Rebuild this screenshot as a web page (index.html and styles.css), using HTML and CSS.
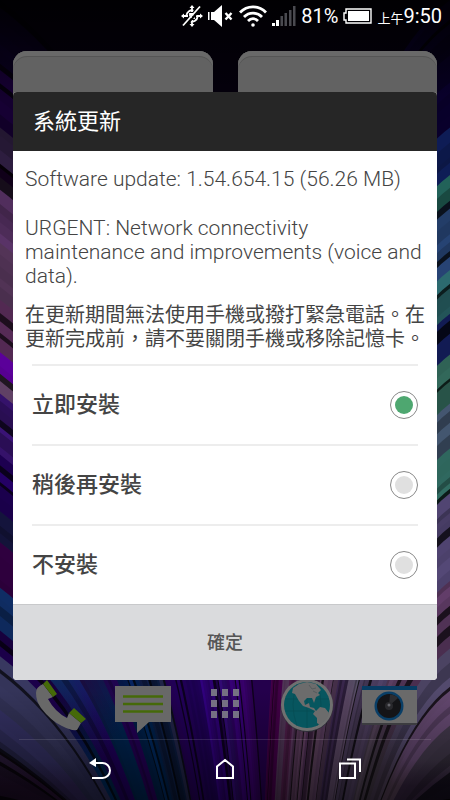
FILE: index.html
```html
<!DOCTYPE html>
<html lang="zh-Hant">
<head>
  <meta charset="UTF-8">
  <meta name="viewport" content="width=device-width, initial-scale=1.0">
  <title>系統更新</title>
  <link rel="stylesheet" href="styles.css">
</head>
<body>
  <div class="phone">
    <svg class="wallpaper" id="wallpaper" viewBox="0 0 450 800" preserveAspectRatio="none" aria-hidden="true"></svg>

    <div class="home">
      <header class="status-bar">
        <svg width="22" height="22" viewBox="0 0 22 22" fill="none" stroke="#fff" stroke-width="1.8">
          <path d="M5.500 10a5.500 5.500 0 0 1 7-4.500M16.500 12a5.500 5.500 0 0 1-7 4.500M11 2v5M11 15v5M2 11h5M15 11h5M9 11.500V9h3M13 10.500V13h-3"/>
          <path d="M11 0l2.500 3h-5zM11 22l2.500-3h-5zM0 11l3-2.500v5zM22 11l-3-2.500v5z" fill="#fff" stroke="none"/>
          <path d="M4 21.500L21 2.500" stroke="#000" stroke-width="2"/>
          <path d="M2 20.500L19 1.500"/>
        </svg>
        <svg width="26" height="22" viewBox="0 0 26 22" fill="#fff">
          <path d="M0 7h1.500v8H0zM3 7h3v8H3zM6 7l8-7v22l-8-7z"/>
          <path d="M17.500 8l6 6.500M23.500 8l-6 6.500" stroke="#fff" stroke-width="2.400"/>
        </svg>
        <svg width="28" height="22" viewBox="0 0 28 22" fill="none" stroke="#fff" stroke-width="2.800">
          <path d="M1 7.500C8 0 20 0 27 7.500M5 12C10 6.800 18 6.800 23 12M9 16C12 13 16 13 19 16"/>
          <circle cx="14" cy="20" r="1.800" fill="#fff" stroke="none"/>
        </svg>
        <svg width="24" height="22" viewBox="0 0 24 22" fill="#4a4a50">
          <path fill="#fff" d="M0 18h3v3H0zM4 15h3v6H4z"/>
          <path d="M8.500 11h2.500v10H8.500zM12.500 8H15v13h-2.500zM17 5h2.500v16H17zM21 1h2.500v20H21z"/>
        </svg>
        <span class="percent">81%</span>
        <svg width="29" height="16" viewBox="0 0 29 16">
          <path d="M3 1h25v14H3v-3H1V5h2z" fill="none" stroke="#fff" stroke-width="1.400"/>
          <path d="M5 3h21v10H5z" fill="#fff"/>
        </svg>
        <span class="clock"><small>上午</small>9:50</span>
      </header>

      <div class="widgets">
        <div class="widget"></div>
        <div class="widget"></div>
      </div>

      <nav class="dock">
        <a href="#phone" aria-label="Phone">
          <svg viewBox="0 0 56 60">
            <path d="M10 8Q3 11 3 17Q3 25 8 32Q18 45 29 50Q38 55 44 54L48 47L36 37L34 42Q22 36 15 23L20 21z" fill="#686868"/>
            <path d="M10 8l4-4l10 14l-4 3zM36 37l5-5l12 11l-5 4z" fill="#456908"/>
          </svg>
        </a>
        <a href="#messages" aria-label="Messages">
          <svg viewBox="0 0 56 60">
            <path d="M0 10h56v36H34L22 57V46H0z" fill="#686868"/>
            <path d="M8 20.500h40M8 28h40M8 35.500h40" stroke="#456908" stroke-width="2.500"/>
          </svg>
        </a>
        <a href="#apps" aria-label="Apps">
          <svg viewBox="0 0 56 60" fill="#757183">
            <path d="M14 13h6v7h-6zM25 13h6v7h-6zM36 13h6v7h-6zM14 24h6v7h-6zM25 24h6v7h-6zM36 24h6v7h-6zM14 35h6v7h-6zM25 35h6v7h-6zM36 35h6v7h-6z"/>
          </svg>
        </a>
        <a href="#browser" aria-label="Internet">
          <svg viewBox="0 0 56 60">
            <circle cx="28" cy="30" r="26" fill="#30303a"/>
            <circle cx="28" cy="29" r="26" fill="#707070"/>
            <circle cx="28" cy="29" r="23" fill="#07565f"/>
            <path d="M6 23h44M6 35h44M28 6v46M18 8q-8 20 0 42M38 8q8 20 0 42" fill="none" stroke="#064950" stroke-width="0.600"/>
            <path d="M14 12L20 8L28 6L37 8L42 14L39 17L41 19L37 21L35 27L33 22L28 22L25 25L26 29L30 27L31 31L35 32L37 35L41 31L46 32L50 37L48 43L44 46L41 49L38 47L38 42L34 38L36 35L30 32L24 30L20 25L16 18L13 17z" fill="#6c6c6c"/>
            <path d="M30 9l3 4l4-1M34 15l4 2" fill="none" stroke="#555b5d" stroke-width="1"/>
          </svg>
        </a>
        <a href="#camera" aria-label="Camera">
          <svg viewBox="0 0 56 60">
            <path d="M1 10h55v39H1z" fill="#3c3c40"/>
            <path d="M1 10h55v37H1z" fill="#6a6a6a"/>
            <path d="M1 10h55v4H1z" fill="#073c63"/>
            <circle cx="28" cy="30" r="14.500" fill="#093e66"/>
            <circle cx="28" cy="30" r="12" fill="#141417"/>
            <path d="M28 30L29 18.500A12 12 0 0 1 37 22z" fill="#2c2c30"/>
            <circle cx="28" cy="30" r="4" fill="#28282c"/>
            <circle cx="28" cy="29" r="1.500" fill="#66666c"/>
          </svg>
        </a>
      </nav>

      <footer class="nav-bar">
        <button type="button" aria-label="Back">
          <svg width="22" height="22" viewBox="0 0 22 22" fill="none" stroke="#fff" stroke-width="2">
            <path d="M6 5h7.500a7.500 7.500 0 0 1 0 15H3"/>
            <path d="M0 5l7-5v9z" fill="#fff" stroke="none"/>
          </svg>
        </button>
        <button type="button" aria-label="Home">
          <svg width="22" height="22" viewBox="0 0 22 22" fill="none" stroke="#fff" stroke-width="2">
            <path d="M3 20V8.500L11 2l8 6.500V20z"/>
          </svg>
        </button>
        <button type="button" aria-label="Recent apps">
          <svg width="22" height="22" viewBox="0 0 22 22" fill="none" stroke="#fff" stroke-width="2">
            <path d="M1 5.500h15V20H1zM8 1.500h13V14"/>
          </svg>
        </button>
      </footer>
    </div>

    <div class="overlay">
      <form class="dialog" role="dialog" aria-labelledby="dialog-title">
        <h1 id="dialog-title">系統更新</h1>
        <div class="message">
          <p>Software update: 1.54.654.15 (56.26 MB)</p>
          <p>URGENT: Network connectivity maintenance and improvements (voice and data).</p>
          <p class="warning">在更新期間無法使用手機或撥打緊急電話。在更新完成前，請不要關閉手機或移除記憶卡。</p>
        </div>
        <div class="options">
          <label>立即安裝 <input type="radio" name="install" value="now" checked></label>
          <label>稍後再安裝 <input type="radio" name="install" value="later"></label>
          <label>不安裝 <input type="radio" name="install" value="never"></label>
        </div>
        <button type="button" class="confirm">確定</button>
      </form>
    </div>
  </div>
  <script src="wallpaper.js"></script>
</body>
</html>
```

FILE: styles.css
```css
* {
  box-sizing: border-box;
}

body {
  margin: 0;
  background: #04000c;
  font-family: Roboto, "Noto Sans CJK TC", sans-serif;
  color: #444;
}

/* wallpaper, home screen and dialog share one grid cell */
.phone {
  display: grid;
  min-height: 100vh;
}
.wallpaper,
.home,
.overlay {
  grid-area: 1 / 1;
  min-width: 0;
}
.wallpaper {
  width: 100%;
  height: 100vh;
}

.home {
  display: flex;
  flex-direction: column;
}

.status-bar {
  display: flex;
  justify-content: flex-end;
  align-items: center;
  gap: 5px;
  height: 32px;
  padding-right: 8px;
  color: #fff;
  font-size: 20px;
}
.clock small {
  font-size: 13px;
}

.widgets {
  display: flex;
  flex: 1;
  gap: 25px;
  padding: 19px 13px 0;
}
.widget {
  flex: 1;
  height: 160px;
  border-radius: 14px;
  background: #626262;
  box-shadow: inset 0 5px #696969, inset 0 6px #555;
}

.dock {
  display: flex;
  padding: 0 20px 3px;
}
.dock a {
  flex: 1;
  display: flex;
  justify-content: center;
}
.dock svg {
  width: 56px;
  height: 60px;
}

.nav-bar {
  display: flex;
  height: 61px;
  margin: 0 19px;
  padding: 0 19px;
  border-top: 1px solid rgba(255, 255, 255, 0.12);
}
.nav-bar button {
  flex: 1;
  padding: 0;
  border: none;
  background: none;
  cursor: pointer;
}

.overlay {
  display: flex;
  align-items: center;
  padding: 32px 13px 60px;
}

.dialog {
  flex: 1;
  min-width: 0;
  border-radius: 4px;
  overflow: hidden;
  background: #fff;
}
.dialog h1 {
  margin: 0;
  padding: 0 20px;
  background: #262626;
  color: #fff;
  font-size: 22px;
  font-weight: 400;
  line-height: 59px;
}

.message {
  padding: 16px 12px 13px;
  font-size: 21px;
  font-weight: 300;
  line-height: 24px;
}
.message p {
  margin: 0 0 25px;
}
.message .warning {
  margin: -10px 0 0;
  font-size: 20px;
  font-weight: 400;
}

.options {
  padding: 0 19px;
}
.options label {
  display: flex;
  justify-content: space-between;
  align-items: center;
  height: 80px;
  border-top: 2px solid #ededed;
  font-size: 22px;
  font-weight: 500;
  line-height: 36px;
  cursor: pointer;
}
.options input {
  appearance: none;
  width: 28px;
  height: 28px;
  margin: 0;
  padding: 4px;
  border: 1px solid #888;
  border-radius: 50%;
  background: #e0e0e0 content-box;
}
.options input:checked {
  background-color: #4ea770;
}

.confirm {
  display: block;
  width: 100%;
  height: 76px;
  padding: 0 0 4px;
  border: none;
  border-top: 1px solid #c8c9cb;
  background: #dadbdd;
  color: #555;
  font: inherit;
  font-size: 18px;
  font-weight: 500;
  cursor: pointer;
}
```

FILE: wallpaper.js
```js
const NS = 'http://www.w3.org/2000/svg';
const svg = document.getElementById('wallpaper');

// each stop: y on the screen edge, colour there, colour at the bottom
const left = [
  [0, '#08001c', '#30005c'],
  [60, '#12002a', '#2c0060'],
  [120, '#281a38', '#2b0866'],
  [150, '#100018', '#1c0044'],
  [170, '#4a2a55', '#280068'],
  [240, '#4c3050', '#1c0050'],
  [290, '#603060', '#260064'],
  [340, '#4c0080', '#1c0044'],
  [370, '#6a4870', '#242850'],
  [390, '#301060', '#0a1838'],
  [450, '#20005a', '#002454'],
  [510, '#101030', '#1c0044'],
  [540, '#300040', '#002450'],
  [580, '#0c2450', '#180048'],
  [620, '#1a0045', '#002450'],
  [655, '#3a3a64', '#2c2c54'],
  [700, '#2a2850', '#241c40'],
  [750, '#20142c', '#1c0c24']
];
const right = [
  [0, '#06001c', '#38003c'],
  [80, '#080028', '#48304e'],
  [125, '#0c1848', '#40183c'],
  [170, '#1c5048', '#482c4c'],
  [200, '#203860', '#503450'],
  [270, '#286064', '#442848'],
  [310, '#10184a', '#503850'],
  [350, '#2c5c50', '#4c3450'],
  [400, '#3a4a60', '#302040'],
  [440, '#285850', '#4c3c54'],
  [490, '#443a60', '#3c3048'],
  [570, '#5a3860', '#483c4c'],
  [640, '#4c4464', '#403448'],
  [680, '#563e60', '#403040'],
  [720, '#383040', '#281c30'],
  [770, '#18141c', '#100c18']
];

let seed = 7;
function rand() {
  seed = (seed * 16807) % 2147483647;
  return seed / 2147483647;
}

function shade(hex, k) {
  const n = parseInt(hex.slice(1), 16);
  const c = [n >> 16, (n >> 8) & 255, n & 255].map(v => Math.round(v * k));
  return `rgb(${c.join(',')})`;
}

function add(name, attrs, parent = svg) {
  const el = document.createElementNS(NS, name);
  for (const key in attrs) el.setAttribute(key, attrs[key]);
  parent.appendChild(el);
  return el;
}

// every strand covers everything below it, so the next one leaves a ribbon
function drawStrands(stops, side) {
  let y = 0;
  let i = 0;
  while (y < 800) {
    const stop = stops.filter(s => s[0] <= y).pop();
    const k = rand() < 0.2 ? 0.3 : 0.8 + rand() * 0.45;
    const reach = (side === 'left' ? 262 : 185) * Math.pow(1 - y / 800, 0.5);
    // high strands turn down sharply, low ones run nearly straight
    const bend = reach * (0.85 - 0.35 * y / 800);
    const px = v => side === 'left' ? v : 450 - v;
    const id = side + i++;
    const grad = add('linearGradient', {
      id, gradientUnits: 'userSpaceOnUse', x1: 0, x2: 0, y1: Math.min(y + 60, 760), y2: 800
    });
    add('stop', { offset: 0, 'stop-color': shade(stop[1], k) }, grad);
    add('stop', { offset: 0.65, 'stop-color': shade(stop[2], k) }, grad);
    add('path', {
      d: `M${px(0)} ${y}Q${px(bend)} ${y + Math.min(bend * 0.75, (800 - y) * 0.45)} ${px(reach)} 800H${px(0)}Z`,
      fill: `url(#${id})`
    });
    y += k < 0.4 ? 3 + rand() * 5 : 5 + rand() * 10;
  }
}

function drawFade(id, y, height, from, to) {
  const grad = add('linearGradient', { id, x1: 0, x2: 0, y1: 0, y2: 1 });
  add('stop', { offset: 0, 'stop-color': '#000', 'stop-opacity': from }, grad);
  add('stop', { offset: 1, 'stop-color': '#000', 'stop-opacity': to }, grad);
  add('rect', { y, width: 450, height, fill: `url(#${id})` });
}

add('rect', { width: 450, height: 800, fill: '#04000c' });
// fills the gap between the two fans
add('rect', { x: 225, y: 600, width: 90, height: 200, fill: '#24004c' });
drawStrands(left, 'left');
drawStrands(right, 'right');
drawFade('fade-top', 0, 100, 0.8, 0);
drawFade('fade-bottom', 690, 110, 0, 0.5);
```
